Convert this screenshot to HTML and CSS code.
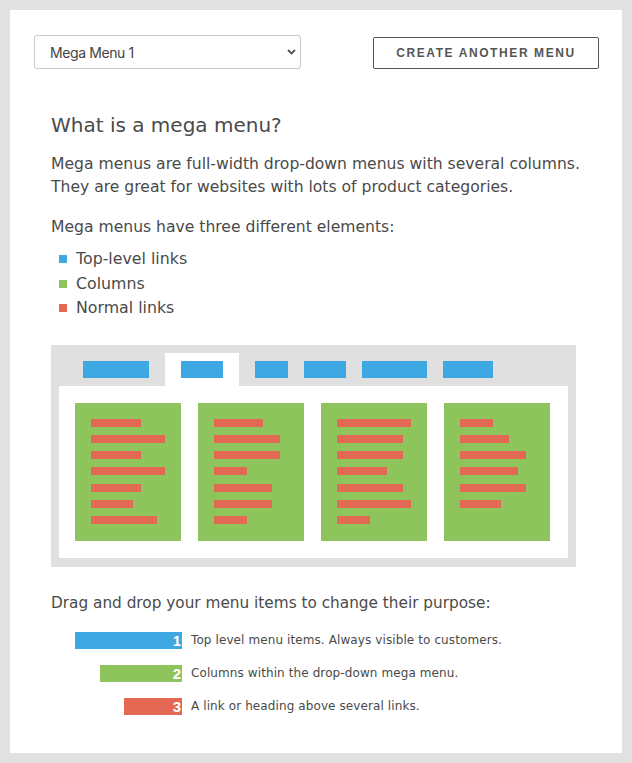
FILE: index.html
```html
<!DOCTYPE html>
<html>
<head>
<meta charset="utf-8">
<link rel="stylesheet" href="styles.css">
</head>
<body>
<div class="card">
  <div class="toolbar">
    <div class="select-wrap">
      <select class="select"><option>Mega Menu 1</option></select>
      <svg class="chev" width="9" height="6" viewBox="0 0 9 6"><path d="M1 1 L4.5 4.5 L8 1" fill="none" stroke="#555" stroke-width="1.8"/></svg>
    </div>
    <button class="btn">CREATE ANOTHER MENU</button>
  </div>
  <div class="content">
    <h2 class="title">What is a mega menu?</h2>
    <p class="para">Mega menus are full-width drop-down menus with several columns.<br>They are great for websites with lots of product categories.</p>
    <p class="para p2">Mega menus have three different elements:</p>
    <ul class="elements">
      <li><span class="sq blue"></span>Top-level links</li>
      <li><span class="sq green"></span>Columns</li>
      <li><span class="sq red"></span>Normal links</li>
    </ul>
    <div class="diagram">
      <div class="tabs">
        <div class="tab"><span class="tbar" style="width:66px"></span></div>
        <div class="tab active"><span class="tbar" style="width:42px"></span></div>
        <div class="tab"><span class="tbar" style="width:33px"></span></div>
        <div class="tab"><span class="tbar" style="width:42px"></span></div>
        <div class="tab"><span class="tbar" style="width:65px"></span></div>
        <div class="tab"><span class="tbar" style="width:50px"></span></div>
      </div>
      <div class="panel">
        <div class="col">
          <span class="link" style="width:50px"></span>
          <span class="link" style="width:74px"></span>
          <span class="link" style="width:50px"></span>
          <span class="link" style="width:74px"></span>
          <span class="link" style="width:50px"></span>
          <span class="link" style="width:42px"></span>
          <span class="link" style="width:66px"></span>
        </div>
        <div class="col">
          <span class="link" style="width:49px"></span>
          <span class="link" style="width:66px"></span>
          <span class="link" style="width:66px"></span>
          <span class="link" style="width:33px"></span>
          <span class="link" style="width:58px"></span>
          <span class="link" style="width:58px"></span>
          <span class="link" style="width:33px"></span>
        </div>
        <div class="col">
          <span class="link" style="width:74px"></span>
          <span class="link" style="width:66px"></span>
          <span class="link" style="width:66px"></span>
          <span class="link" style="width:50px"></span>
          <span class="link" style="width:66px"></span>
          <span class="link" style="width:74px"></span>
          <span class="link" style="width:33px"></span>
        </div>
        <div class="col">
          <span class="link" style="width:33px"></span>
          <span class="link" style="width:49px"></span>
          <span class="link" style="width:66px"></span>
          <span class="link" style="width:58px"></span>
          <span class="link" style="width:66px"></span>
          <span class="link" style="width:41px"></span>
        </div>
      </div>
    </div>
    <p class="para drag">Drag and drop your menu items to change their purpose:</p>
    <div class="legend">
      <div class="lbar-cell"><span class="lbar blue" style="width:107px">1</span></div>
      <div class="ltext">Top level menu items. Always visible to customers.</div>
      <div class="lbar-cell"><span class="lbar green" style="width:82px">2</span></div>
      <div class="ltext">Columns within the drop-down mega menu.</div>
      <div class="lbar-cell"><span class="lbar red" style="width:58px">3</span></div>
      <div class="ltext">A link or heading above several links.</div>
    </div>
  </div>
</div>
</body>
</html>
```
FILE: styles.css
```css
* { box-sizing: border-box; }
html, body { margin: 0; padding: 0; }
body {
  background: #e1e1e1;
  padding: 10px;
  font-family: "DejaVu Sans", "Noto Sans", sans-serif;
  color: #4a4a4a;
}
.card {
  background: #fff;
  width: 612px;
  height: 743px;
  padding: 25px 23px 0 24px;
}
.toolbar {
  display: flex;
  justify-content: space-between;
  align-items: center;
}
.select-wrap {
  position: relative;
  width: 267px;
  height: 34px;
}
.select {
  appearance: none;
  -webkit-appearance: none;
  width: 100%;
  height: 100%;
  border: 1px solid #c8c8c8;
  border-radius: 3px;
  background: #fff;
  padding: 0 15px;
  font-family: Inter, "Noto Sans", sans-serif;
  font-size: 14px;
  letter-spacing: -0.4px;
  color: #444;
}
.chev {
  position: absolute;
  right: 5px;
  top: 14px;
}
.btn {
  width: 226px;
  height: 32px;
  border: 1px solid #555;
  border-radius: 2px;
  background: #fff;
  color: #555;
  font-family: "Liberation Sans", Arial, sans-serif;
  font-weight: bold;
  font-size: 12px;
  letter-spacing: 1.6px;
  padding: 0;
  margin-top: 1px;
}
.content {
  padding-left: 17px;
}
.title {
  margin: 44px 0 0;
  font-size: 20px;
  font-weight: normal;
  line-height: 24px;
  color: #4a4a4a;
}
.para {
  margin: 0;
  font-size: 15.6px;
  line-height: 23px;
}
.title + .para { margin-top: 16px; }
.p2 { margin-top: 17px; }
.elements {
  list-style: none;
  margin: 8px 0 0;
  padding: 0;
}
.elements li {
  display: flex;
  align-items: center;
  font-size: 15.8px;
  line-height: 24.5px;
  padding-left: 8px;
}
.sq {
  width: 8px;
  height: 8px;
  margin-right: 9px;
  flex: none;
}
.blue { background: #3ea8e2; }
.green { background: #8ec45c; }
.red { background: #e46954; }
.diagram {
  margin-top: 24px;
  width: 525px;
  background: #e0e0e0;
  padding: 8px 8px 9px 8px;
}
.tabs {
  display: flex;
  gap: 16px;
  padding-left: 24px;
  height: 33px;
}
.tab {
  padding-top: 8px;
}
.tab.active {
  background: #fff;
  padding: 8px 16px 0;
}
.tbar {
  display: block;
  height: 17px;
  background: #3ea8e2;
}
.panel {
  background: #fff;
  display: grid;
  grid-template-columns: repeat(4, 106px);
  column-gap: 17px;
  padding: 17px 17px 17px 16px;
}
.col {
  background: #8ec45c;
  height: 138px;
  padding: 16px;
  display: flex;
  flex-direction: column;
  gap: 8.3px;
}
.link {
  display: block;
  height: 8px;
  background: #e46954;
}
.drag { margin-top: 25px; font-size: 15.3px; }
.legend {
  display: grid;
  grid-template-columns: 131px auto;
  column-gap: 9px;
  row-gap: 16px;
  margin-top: 17px;
  align-items: center;
}
.lbar-cell {
  display: flex;
  justify-content: flex-end;
}
.lbar {
  display: block;
  height: 17px;
  color: #fff;
  font-family: "Liberation Sans", Arial, sans-serif;
  font-weight: bold;
  font-size: 15px;
  line-height: 17px;
  text-align: right;
  padding-right: 1px;
}
.ltext {
  font-size: 12px;
  line-height: 17px;
  letter-spacing: 0.1px;
}
```
